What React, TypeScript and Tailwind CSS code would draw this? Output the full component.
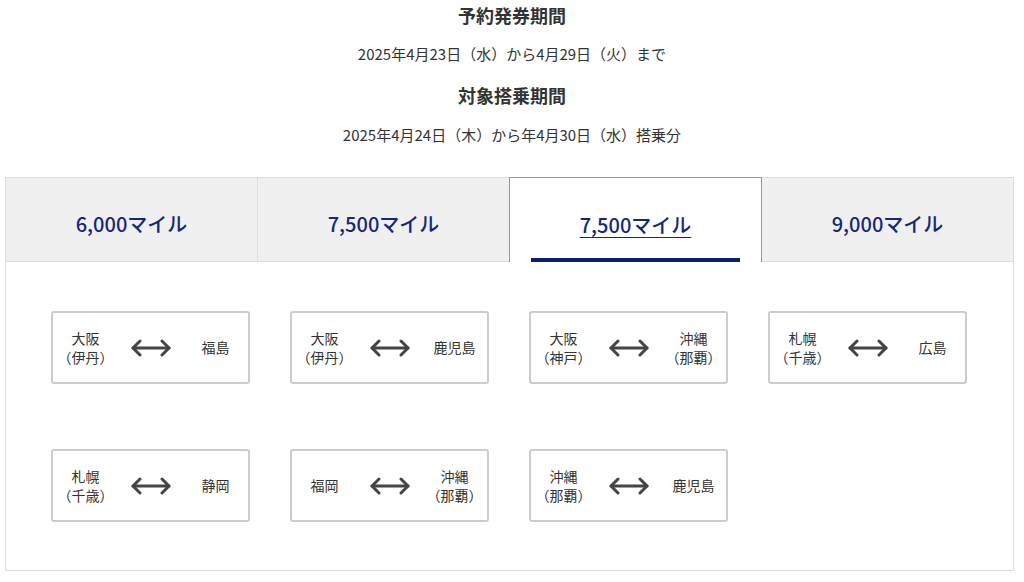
const routes: [string, string, string, string][] = [
  ['大阪', '（伊丹）', '福島', ''],
  ['大阪', '（伊丹）', '鹿児島', ''],
  ['大阪', '（神戸）', '沖縄', '（那覇）'],
  ['札幌', '（千歳）', '広島', ''],
  ['札幌', '（千歳）', '静岡', ''],
  ['福岡', '', '沖縄', '（那覇）'],
  ['沖縄', '（那覇）', '鹿児島', ''],
];

const tabs = ['6,000マイル', '7,500マイル', '7,500マイル', '9,000マイル'];

function Arrow() {
  return (
    <svg width="42" height="18" viewBox="0 0 42 18" fill="none" stroke="#444" strokeWidth={3} strokeLinecap="round" strokeLinejoin="round">
      <path d="M3 9H39" />
      <path d="M10 2L3 9L10 16" />
      <path d="M32 2L39 9L32 16" />
    </svg>
  );
}

function Place({ name, sub }: { name: string; sub: string }) {
  return (
    <div className="flex flex-col items-center">
      <span>{name}</span>
      {sub && <span>{sub}</span>}
    </div>
  );
}

export default function App() {
  return (
    <div className="w-[1024px] h-[582px] overflow-hidden bg-white text-[#333] font-['Noto_Sans_CJK_JP',sans-serif]">
      <div className="flex flex-col items-center">
        <h2 className="mt-[3px] text-[18px] leading-[24px] font-bold">予約発券期間</h2>
        <p className="mt-[16px] text-[15px] leading-[22px]">2025年4月23日（水）から4月29日（火）まで</p>
        <h2 className="mt-[18px] text-[18px] leading-[24px] font-bold">対象搭乗期間</h2>
        <p className="mt-[17px] text-[15px] leading-[22px]">2025年4月24日（木）から年4月30日（水）搭乗分</p>
      </div>

      <div className="mt-[31px] ml-[5px] w-[1009px] border-x border-b border-[#ddd]">
        <div className="flex h-[85px]">
          {tabs.map((t, i) =>
            i === 2 ? (
              <div key={i} className="relative flex-1 flex items-center justify-center pt-[9px] bg-white border-x border-t border-[#999]">
                <span className="text-[20px] font-medium text-[#16267a] underline underline-offset-[4px] decoration-1">{t}</span>
                <div className="absolute bottom-0 left-[21px] right-[21px] h-[4px] bg-[#0c1f6e]" />
              </div>
            ) : (
              <div
                key={i}
                className={`flex-1 flex items-center justify-center pt-[9px] bg-[#f0f0f0] border-t border-b border-[#ddd] ${i === 1 ? 'border-l' : ''}`}
              >
                <span className="text-[20px] font-medium text-[#16267a]">{t}</span>
              </div>
            )
          )}
        </div>

        <div className="pl-[45px] pt-[49px] pb-[48px] grid grid-cols-[repeat(4,199px)] gap-x-[40px] gap-y-[65px]">
          {routes.map(([a, as, b, bs], i) => (
            <div key={i} className="h-[73px] border-2 border-[#ccc] rounded-[3px] grid grid-cols-3 items-center text-center text-[14px] leading-[19px]">
              <Place name={a} sub={as} />
              <div className="flex justify-center">
                <Arrow />
              </div>
              <Place name={b} sub={bs} />
            </div>
          ))}
        </div>
      </div>
    </div>
  );
}
